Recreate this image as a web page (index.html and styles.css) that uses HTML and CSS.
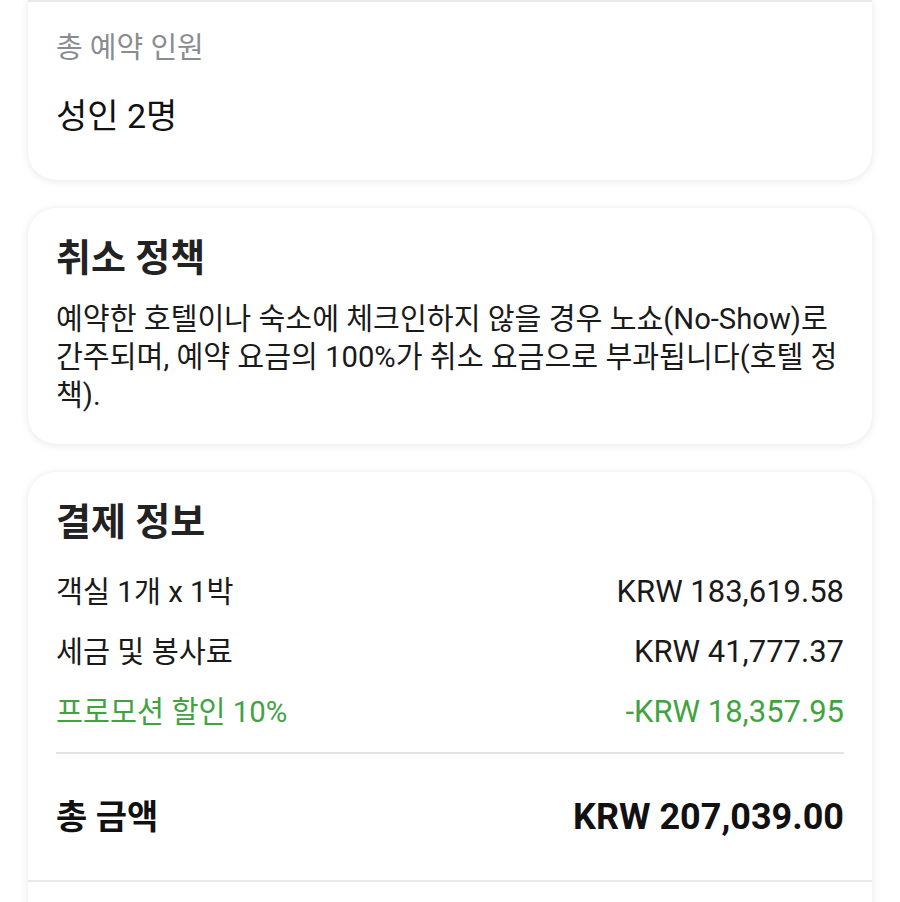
FILE: index.html
```html
<!DOCTYPE html>
<html lang="ko">
<head>
<meta charset="utf-8">
<link rel="stylesheet" href="styles.css">
</head>
<body>
<main class="page">
  <section class="card card-first">
    <div class="card-divider"></div>
    <div class="guest">
      <div class="label">총 예약 인원</div>
      <div class="value">성인 2명</div>
    </div>
  </section>

  <section class="card card-pad">
    <h2 class="title">취소 정책</h2>
    <p class="policy">예약한 호텔이나 숙소에 체크인하지 않을 경우 노쇼(No-Show)로 간주되며, 예약 요금의 100%가 취소 요금으로 부과됩니다(호텔 정책).</p>
  </section>

  <section class="card card-last">
    <div class="pay">
      <h2 class="title">결제 정보</h2>
      <div class="rows">
        <div class="row"><span>객실 1개 x 1박</span><span class="amt">KRW 183,619.58</span></div>
        <div class="row"><span>세금 및 봉사료</span><span class="amt">KRW 41,777.37</span></div>
        <div class="row promo"><span>프로모션 할인 10%</span><span class="amt">-KRW 18,357.95</span></div>
      </div>
      <div class="inner-divider"></div>
      <div class="total"><span>총 금액</span><span class="total-amt">KRW 207,039.00</span></div>
    </div>
    <div class="card-divider"></div>
    <div class="more"></div>
  </section>
</main>
</body>
</html>
```

FILE: styles.css
```css
html, body {
  margin: 0;
  padding: 0;
  background: #ffffff;
}
body {
  font-family: Roboto, "Noto Sans CJK KR", sans-serif;
  color: #111111;
}
.page {
  display: flex;
  flex-direction: column;
  gap: 28px;
  padding: 0 28px;
}
.card {
  background: #ffffff;
  border-radius: 28px;
  box-shadow: 0 1px 8px rgba(0, 0, 0, 0.10);
  overflow: hidden;
}
.card-first {
  border-radius: 0 0 28px 28px;
}
.card-divider {
  height: 2px;
  background: #e9e9e9;
}
.guest {
  padding: 28px 28px 40px;
}
.label {
  font-size: 29px;
  line-height: 36px;
  color: #8a8c91;
}
.value {
  margin-top: 26px;
  font-size: 34px;
  line-height: 48px;
  color: #111111;
}
.card-pad {
  padding: 28px 28px 30px;
}
.title {
  margin: 0;
  font-size: 38px;
  line-height: 44px;
  font-weight: 700;
  color: #222222;
}
.policy {
  margin: 20px 0 0;
  font-size: 29.2px;
  line-height: 38px;
  color: #1a1a1a;
}
.card-last {
  border-radius: 28px 28px 0 0;
}
.pay {
  padding: 28px 28px 0;
}
.rows {
  margin-top: 18px;
}
.row {
  display: flex;
  justify-content: space-between;
  align-items: center;
  padding: 10px 0;
  font-size: 29.4px;
  line-height: 40px;
  color: #1a1a1a;
}
.amt {
  font-size: 31px;
}
.row.promo {
  color: #3fa43f;
}
.inner-divider {
  margin-top: 10px;
  height: 2px;
  background: #e4e4e4;
}
.total {
  display: flex;
  justify-content: space-between;
  align-items: center;
  padding: 41px 0 41px;
  font-size: 34px;
  line-height: 44px;
  font-weight: 700;
  color: #111111;
}
.total-amt {
  font-size: 36px;
}
.more {
  height: 80px;
}
```
